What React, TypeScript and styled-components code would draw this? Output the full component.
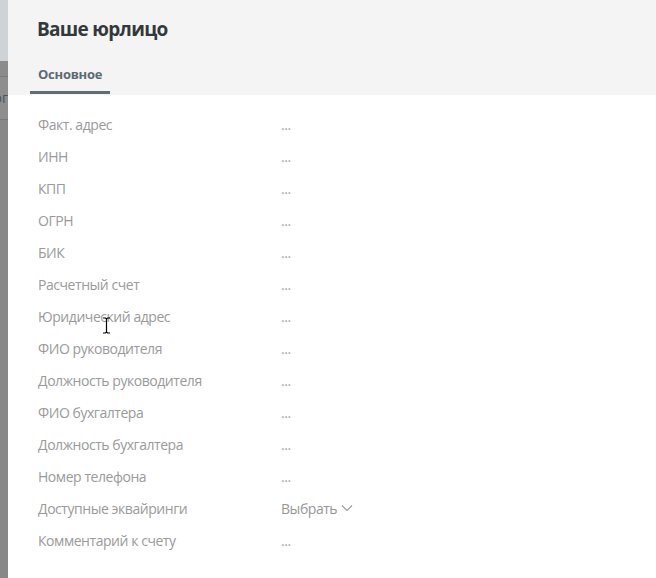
import styled, { createGlobalStyle } from "styled-components";

const GlobalStyle = createGlobalStyle`
  html, body {
    margin: 0;
    padding: 0;
    height: 100%;
  }
  body {
    font-family: "Open Sans", "Noto Sans", sans-serif;
    background: #888888;
    overflow: hidden;
  }
`;

const fields = [
  "Факт. адрес",
  "ИНН",
  "КПП",
  "ОГРН",
  "БИК",
  "Расчетный счет",
  "Юридический адрес",
  "ФИО руководителя",
  "Должность руководителя",
  "ФИО бухгалтера",
  "Должность бухгалтера",
  "Номер телефона",
  "Доступные эквайринги",
  "Комментарий к счету",
];

const Screen = styled.div`
  display: flex;
  width: 656px;
  height: 578px;
`;

// кусок страницы под модалкой
const Backdrop = styled.div`
  width: 8px;
  flex-shrink: 0;
  display: flex;
  flex-direction: column;
  overflow: hidden;
`;

const BackdropBand = styled.div<{ h: number; bg: string; line?: boolean }>`
  height: ${({ h }) => h}px;
  background: ${({ bg }) => bg};
  border-bottom: ${({ line }) => (line ? "1px solid #7a7a7a" : "none")};
  font-size: 14px;
  color: #4a545b;
  line-height: ${({ h }) => h}px;
  white-space: nowrap;
  direction: rtl;
`;

const Panel = styled.div`
  flex: 1;
  background: #ffffff;
  display: flex;
  flex-direction: column;
  position: relative;
`;

const Header = styled.div`
  background: #f4f4f4;
  padding: 16px 0 0 22px;
  height: 95px;
  box-sizing: border-box;
  display: flex;
  flex-direction: column;
`;

const Title = styled.h1`
  margin: 0 0 0 7px;
  font-size: 19px;
  font-weight: 700;
  color: #33383b;
  line-height: 26px;
  letter-spacing: -0.7px;
`;

const Tabs = styled.div`
  display: flex;
  margin-top: 22px;
`;

const Tab = styled.div<{ active?: boolean }>`
  padding: 0 8px 7px;
  font-size: 13px;
  font-weight: 700;
  color: #5a6a72;
  line-height: 20px;
  border-bottom: 3px solid ${({ active }) => (active ? "#5f6e75" : "transparent")};
  letter-spacing: -0.25px;
`;

const Fields = styled.div`
  display: flex;
  flex-direction: column;
  padding: 13px 0 0 30px;
`;

const Row = styled.div`
  display: grid;
  grid-template-columns: 243px 1fr;
  height: 32px;
  align-items: center;
  font-size: 14px;
  letter-spacing: -0.45px;
`;

const Label = styled.span`
  color: #9a9a9a;
`;

const Value = styled.span`
  color: #a5a5a5;
  display: flex;
  align-items: center;
  gap: 4px;
`;

const Select = styled(Value)`
  color: #979797;
  cursor: pointer;
`;

const Cursor = styled.svg`
  position: absolute;
  left: 94px;
  top: 317px;
`;

export default function App() {
  return (
    <>
      <GlobalStyle />
      <Screen>
        <Backdrop>
          <BackdropBand h={61} bg="#ced3d7" />
          <BackdropBand h={15} bg="#8b8b8b" line />
          <BackdropBand h={42} bg="#8e8e8e" line>
            ог
          </BackdropBand>
          <BackdropBand h={460} bg="#888888" />
        </Backdrop>
        <Panel>
          <Header>
            <Title>Ваше юрлицо</Title>
            <Tabs>
              <Tab active>Основное</Tab>
            </Tabs>
          </Header>
          <Fields>
            {fields.map((f) => (
              <Row key={f}>
                <Label>{f}</Label>
                {f === "Доступные эквайринги" ? (
                  <Select>
                    Выбрать
                    <svg width="12" height="8" viewBox="0 0 12 8">
                      <path d="M1 1.5l5 5 5-5" fill="none" stroke="#999" strokeWidth="1.1" />
                    </svg>
                  </Select>
                ) : (
                  <Value>...</Value>
                )}
              </Row>
            ))}
          </Fields>
          <Cursor width="9" height="17" viewBox="0 0 9 17">
            <path d="M1 1h2.5l1 1 1-1H8M4.5 2v13M1 16h2.5l1-1 1 1H8" fill="none" stroke="#000" strokeWidth="1.2" />
          </Cursor>
        </Panel>
      </Screen>
    </>
  );
}
